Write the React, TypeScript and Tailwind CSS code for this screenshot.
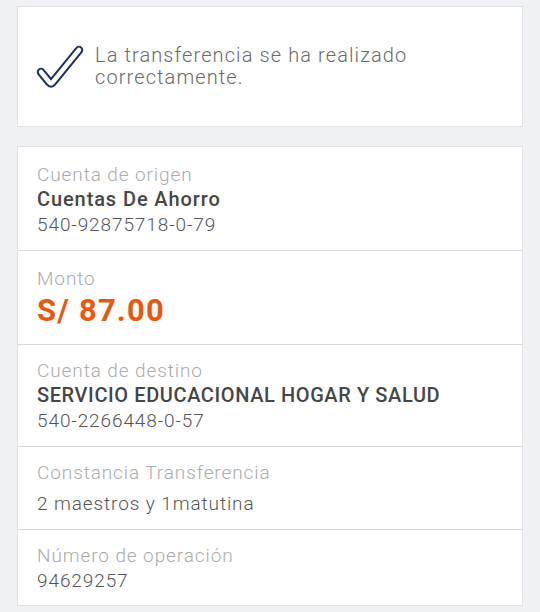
const font = { fontFamily: "Roboto, 'Noto Sans', sans-serif" };

function CheckIcon() {
  return (
    <svg width="48" height="46" viewBox="0 0 48 46" className="shrink-0">
      <path d="M5 28 L13.5 38.5 Q15 40.5 16.5 38.5 L43 6" fill="none" stroke="#1f2f5c" strokeWidth="8.5" strokeLinecap="round" strokeLinejoin="round" />
      <path d="M5 28 L13.5 38.5 Q15 40.5 16.5 38.5 L43 6" fill="none" stroke="#ffffff" strokeWidth="4.5" strokeLinecap="round" strokeLinejoin="round" />
    </svg>
  );
}

function Row({ label, children, className = "" }: { label: string; children: React.ReactNode; className?: string }) {
  return (
    <div className={`pl-[19px] pr-4 border-b border-[#d8d9dc] last:border-b-0 ${className}`}>
      <div className="text-[19px] leading-[25px] tracking-[0.9px] text-[#ababab] font-light">{label}</div>
      {children}
    </div>
  );
}

export default function App() {
  return (
    <div className="w-[540px] h-[612px] overflow-hidden bg-[#eff1f5] px-[17px] pt-[6px]" style={font}>
      <div className="h-[121px] bg-white border border-[#dfe1e5] flex items-center gap-[11px] pl-[18px]">
        <CheckIcon />
        <p className="text-[20px] leading-[22px] tracking-[1.1px] text-[#6a6a6a] font-light mt-[-2px]">
          La transferencia se ha realizado
          <br />
          correctamente.
        </p>
      </div>

      <div className="mt-[19px] bg-white border border-[#dfe1e5]">
        <Row label="Cuenta de origen" className="pt-[15px] pb-[13px]">
          <div className="text-[20px] leading-[25px] tracking-[0.9px] font-medium text-[#464646]">Cuentas De Ahorro</div>
          <div className="text-[19px] leading-[25px] tracking-[0.9px] text-[#555555] font-light">540-92875718-0-79</div>
        </Row>
        <Row label="Monto" className="pt-[15px] pb-[13px]">
          <div className="text-[31px] leading-[40px] tracking-[1.2px] font-bold text-[#e9580c]">S/ 87.00</div>
        </Row>
        <Row label="Cuenta de destino" className="pt-[13px] pb-[13px]">
          <div className="text-[20px] leading-[25px] tracking-[0.6px] font-medium text-[#464646]">SERVICIO EDUCACIONAL HOGAR Y SALUD</div>
          <div className="text-[19px] leading-[25px] tracking-[0.9px] text-[#555555] font-light">540-2266448-0-57</div>
        </Row>
        <Row label="Constancia Transferencia" className="pt-[13px] pb-[13px]">
          <div className="mt-[6px] text-[19px] leading-[25px] tracking-[0.9px] text-[#555555] font-light">2 maestros y 1matutina</div>
        </Row>
        <Row label="Número de operación" className="pt-[13px] pb-[12px]">
          <div className="text-[19px] leading-[25px] tracking-[0.9px] text-[#555555] font-light">94629257</div>
        </Row>
      </div>
    </div>
  );
}
